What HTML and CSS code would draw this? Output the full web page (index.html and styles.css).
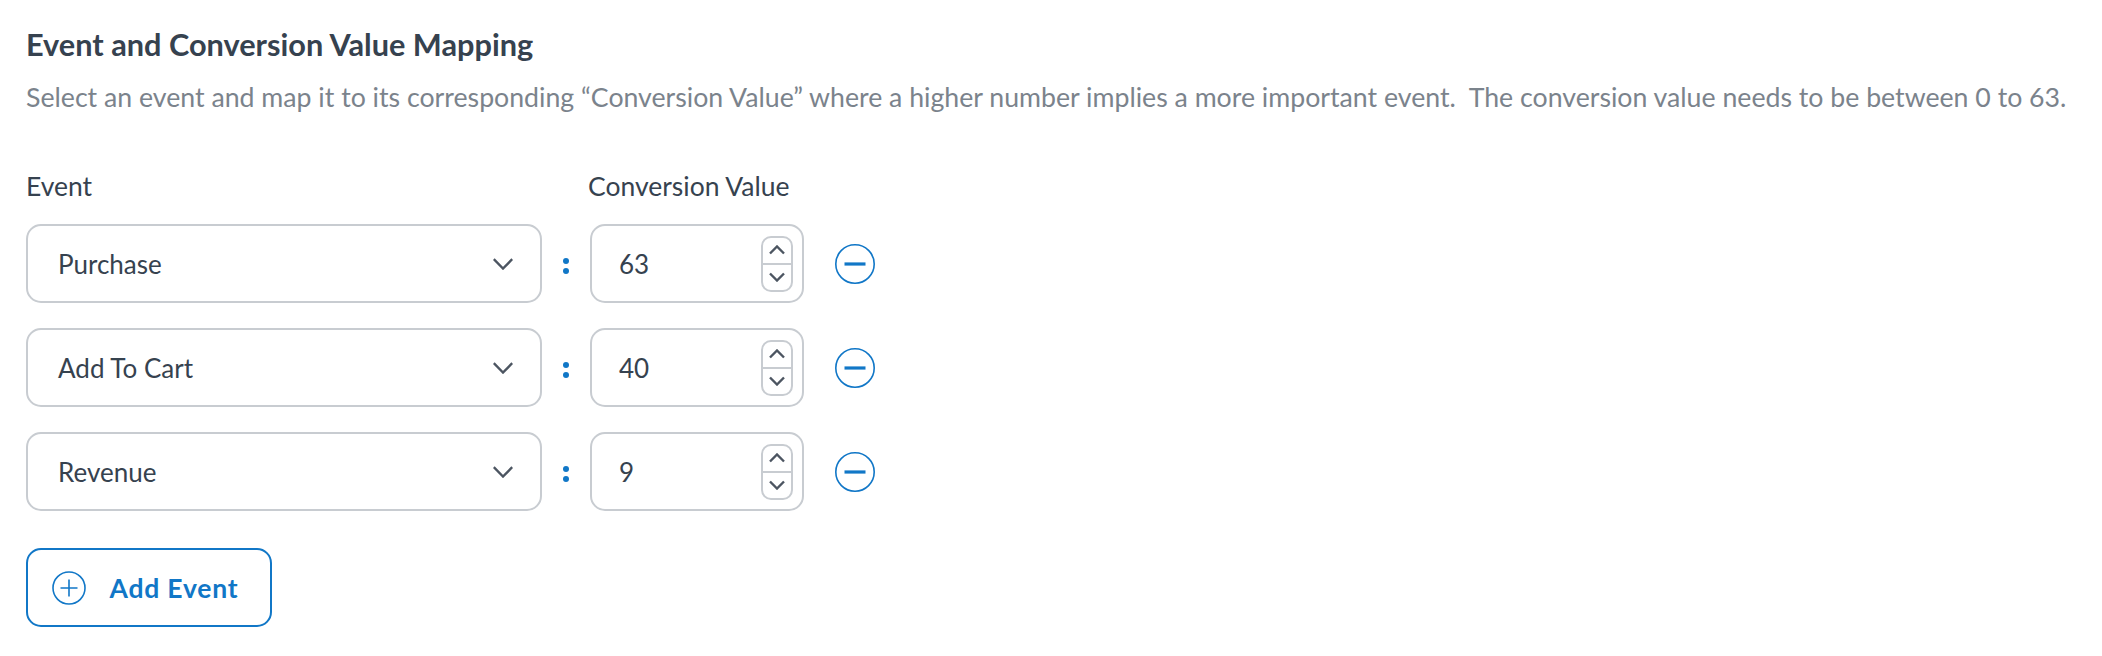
FILE: index.html
```html
<!DOCTYPE html>
<html lang="en">
<head>
<meta charset="utf-8">
<title>Event and Conversion Value Mapping</title>
<link rel="stylesheet" href="styles.css">
</head>
<body>
<main class="panel">
  <h2 class="title">Event and Conversion Value Mapping</h2>
  <p class="desc">Select an event and map it to its corresponding “Conversion Value” where a higher number implies a more important event.&nbsp; The conversion value needs to be between 0 to 63.</p>
  <div class="labels">
    <span class="label label-event">Event</span>
    <span class="label">Conversion Value</span>
  </div>
  <div class="rows">
    <div class="row">
      <div class="select"><span>Purchase</span><svg class="chev" viewBox="0 0 20 12"><path d="M.8 1.200 10 10.500l9.200-9.300"/></svg></div>
      <span class="colon"><i></i><i></i></span>
      <div class="number"><span>63</span>
        <div class="spin">
          <div class="spin-btn"><svg viewBox="0 0 16 10"><path d="M1 8.500 8 1.500l7 7"/></svg></div>
          <div class="spin-btn"><svg viewBox="0 0 16 10"><path d="M1 1.500 8 8.500l7-7"/></svg></div>
        </div>
      </div>
      <svg class="minus" viewBox="0 0 40 40"><circle cx="20" cy="20" r="19.200"/><path d="M9.500 20h21"/></svg>
    </div>
    <div class="row">
      <div class="select"><span>Add To Cart</span><svg class="chev" viewBox="0 0 20 12"><path d="M.8 1.200 10 10.500l9.200-9.300"/></svg></div>
      <span class="colon"><i></i><i></i></span>
      <div class="number"><span>40</span>
        <div class="spin">
          <div class="spin-btn"><svg viewBox="0 0 16 10"><path d="M1 8.500 8 1.500l7 7"/></svg></div>
          <div class="spin-btn"><svg viewBox="0 0 16 10"><path d="M1 1.500 8 8.500l7-7"/></svg></div>
        </div>
      </div>
      <svg class="minus" viewBox="0 0 40 40"><circle cx="20" cy="20" r="19.200"/><path d="M9.500 20h21"/></svg>
    </div>
    <div class="row">
      <div class="select"><span>Revenue</span><svg class="chev" viewBox="0 0 20 12"><path d="M.8 1.200 10 10.500l9.200-9.300"/></svg></div>
      <span class="colon"><i></i><i></i></span>
      <div class="number"><span>9</span>
        <div class="spin">
          <div class="spin-btn"><svg viewBox="0 0 16 10"><path d="M1 8.500 8 1.500l7 7"/></svg></div>
          <div class="spin-btn"><svg viewBox="0 0 16 10"><path d="M1 1.500 8 8.500l7-7"/></svg></div>
        </div>
      </div>
      <svg class="minus" viewBox="0 0 40 40"><circle cx="20" cy="20" r="19.200"/><path d="M9.500 20h21"/></svg>
    </div>
  </div>
  <button class="add" type="button">
    <svg class="plus" viewBox="0 0 34 34"><circle cx="17" cy="17" r="16"/><path d="M17 8.500v17M8.500 17h17"/></svg>
    <span>Add Event</span>
  </button>
</main>
</body>
</html>
```
FILE: styles.css
```css
* { box-sizing: border-box; }
html, body { margin: 0; background: #fff; }
body { width: 2102px; height: 656px; overflow: hidden; font-family: "Lato", "Noto Sans", sans-serif; color: #36424f; }
.panel { padding: 26px 26px 0; }
.title { margin: 0; font-size: 30.700px; line-height: 38px; font-weight: 700; color: #36424f; }
.desc { margin: 15px 0 0; font-size: 26.700px; line-height: 36px; color: #7b838c; white-space: nowrap; }
.labels { display: flex; margin-top: 53px; font-size: 26.500px; line-height: 36px; }
.label-event { width: 562px; }
.rows { display: flex; flex-direction: column; gap: 25px; margin-top: 20px; }
.row { display: flex; align-items: center; height: 79px; font-size: 26px; }
.select, .number { display: flex; align-items: center; height: 79px; border: 2.500px solid #c8ccd1; border-radius: 15px; background: #fff; }
.select { width: 516px; padding: 0 27px 0 30px; justify-content: space-between; }
.chev { width: 20px; height: 12px; fill: none; stroke: #4c5561; stroke-width: 2.400; }
.colon { display: flex; flex-direction: column; gap: 4px; width: 48px; align-items: center; padding-top: 5px; }
.colon i { width: 6px; height: 6px; border-radius: 50%; background: #1177c7; }
.number { width: 214px; padding: 0 9px 0 27px; justify-content: space-between; }
.spin { display: flex; flex-direction: column; width: 32px; height: 56px; border: 2.500px solid #c8ccd1; border-radius: 10px; }
.spin-btn { flex: 1; display: flex; align-items: center; justify-content: center; }
.spin-btn + .spin-btn { border-top: 2.500px solid #c8ccd1; }
.spin-btn svg { width: 16px; height: 10px; fill: none; stroke: #4c5561; stroke-width: 2.400; }
.minus { width: 40px; height: 40px; margin-left: 31px; fill: none; stroke: #1177c7; stroke-width: 1.600; }
.minus path { stroke-width: 3.200; }
.add { display: flex; align-items: center; width: 246px; height: 79px; margin-top: 37px; padding: 0 0 0 23.500px; border: 2.500px solid #1177c7; border-radius: 15px; background: #fff; color: #1177c7; font: 700 26.500px "Lato", "Noto Sans", sans-serif; letter-spacing: 0.800px; }
.plus { width: 34px; height: 34px; margin-right: 24px; fill: none; stroke: #1177c7; stroke-width: 1.600; }
```
